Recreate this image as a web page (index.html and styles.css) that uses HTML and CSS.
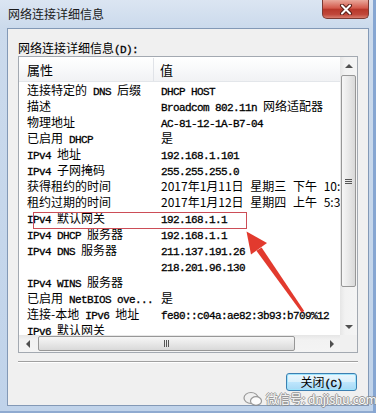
FILE: index.html
```html
<!DOCTYPE html>
<html lang="zh-CN">

<head>
  <meta charset="UTF-8">
  <title>网络连接详细信息</title>
  <link rel="stylesheet" href="styles.css">
</head>

<body>
  <div class="window">
    <!-- Title bar -->
    <div class="titlebar">
      <div class="title">网络连接详细信息</div>
      <div class="close">
        <svg width="14" height="11" viewBox="0 0 14 11">
          <path d="M3 1.5 L11 9.5 M11 1.5 L3 9.5" stroke="#5a1f18" stroke-width="4" stroke-linecap="round" />
          <path d="M3 1.5 L11 9.5 M11 1.5 L3 9.5" stroke="#fff" stroke-width="2" stroke-linecap="round" />
        </svg>
      </div>
    </div>

    <!-- Client area -->
    <div class="client">
      <div class="caption">网络连接详细信息<span class="m">(D):</span></div>

      <div class="listbox">
        <div class="main">
          <div class="head">
            <div class="k">属性</div>
            <div class="v">值</div>
          </div>
          <div class="row"><div class="k">连接特定的<span class="m"> DNS </span>后缀</div><div class="v"><span class="m">DHCP HOST</span></div></div>
          <div class="row"><div class="k">描述</div><div class="v"><span class="m">Broadcom 802.11n </span>网络适配器</div></div>
          <div class="row"><div class="k">物理地址</div><div class="v"><span class="m">AC-81-12-1A-B7-04</span></div></div>
          <div class="row"><div class="k">已启用<span class="m"> DHCP</span></div><div class="v">是</div></div>
          <div class="row"><div class="k"><span class="m">IPv4 </span>地址</div><div class="v"><span class="m">192.168.1.101</span></div></div>
          <div class="row"><div class="k"><span class="m">IPv4 </span>子网掩码</div><div class="v"><span class="m">255.255.255.0</span></div></div>
          <div class="row"><div class="k">获得租约的时间</div><div class="v date">2017年1月11日 星期三 下午 10:35:51</div></div>
          <div class="row"><div class="k">租约过期的时间</div><div class="v date">2017年1月12日 星期四 上午 5:34:51</div></div>
          <div class="row"><div class="k"><span class="m">IPv4 </span>默认网关</div><div class="v"><span class="m">192.168.1.1</span></div></div>
          <div class="row"><div class="k"><span class="m">IPv4 DHCP </span>服务器</div><div class="v"><span class="m">192.168.1.1</span></div></div>
          <div class="row"><div class="k"><span class="m">IPv4 DNS </span>服务器</div><div class="v"><span class="m">211.137.191.26</span></div></div>
          <div class="row"><div class="k"></div><div class="v"><span class="m">218.201.96.130</span></div></div>
          <div class="row"><div class="k"><span class="m">IPv4 WINS </span>服务器</div><div class="v"></div></div>
          <div class="row"><div class="k">已启用<span class="m"> NetBIOS ove...</span></div><div class="v">是</div></div>
          <div class="row"><div class="k">连接-本地<span class="m"> IPv6 </span>地址</div><div class="v"><span class="m">fe80::c04a:ae82:3b93:b709%12</span></div></div>
          <div class="row"><div class="k"><span class="m">IPv6 </span>默认网关</div><div class="v"></div></div>
        </div>

        <!-- Vertical scrollbar -->
        <div class="vscroll">
          <div class="arr up"></div>
          <div class="thumb vthumb"><span class="grip"></span></div>
          <div class="fill"></div>
          <div class="arr down"></div>
        </div>

        <!-- Horizontal scrollbar -->
        <div class="hscroll">
          <div class="arr left"></div>
          <div class="thumb hthumb"><span class="grip"></span></div>
          <div class="fill"></div>
          <div class="arr right"></div>
        </div>
        <div class="corner"></div>
      </div>

      <div class="sep"></div>

      <div class="actions">
        <button class="btn">关闭<span class="m">(C)</span></button>
      </div>
    </div>

    <!-- Annotation overlays -->
    <div class="highlight"></div>
    <svg class="arrow" width="376" height="413" viewBox="0 0 376 413">
      <polygon points="304.2,311 301.8,312.8 256.4,250.8 261.6,247.4" fill="#e23a2e" />
      <polygon points="246.5,231.5 267,243 251,254.5" fill="#e23a2e" />
    </svg>

    <div class="watermark">
      <svg width="20" height="16" viewBox="0 0 20 16">
        <ellipse cx="8" cy="7" rx="7" ry="5.5" fill="none" stroke="#8a8a8a" stroke-width="1.2" />
        <ellipse cx="13" cy="10" rx="5.5" ry="4.3" fill="#fff" stroke="#8a8a8a" stroke-width="1.2" />
      </svg>
      <span>微信号: dnjishu.com</span>
    </div>
  </div>
</body>

</html>
```

FILE: styles.css
```css
/* Global */
body {
  margin: 0;
  font-family: "Noto Sans CJK SC", sans-serif;
  font-size: 12px;
  color: #000;
}

/* latin runs, SimSun-like narrow mono */
.m {
  font-family: "Liberation Mono", monospace;
  font-size: 11px;
  letter-spacing: -0.6px;
  -webkit-text-stroke: 0.3px #000;
}

/* Window frame */
.window {
  position: relative;
  width: 376px;
  height: 413px;
  box-sizing: border-box;
  display: flex;
  flex-direction: column;
  padding: 0 7px 7px 7px;
  background: linear-gradient(#dbe5f2, #cbdaec 28px, #c0d3ea);
  box-shadow: inset -3px 0 0 #86a6d2, inset 0 -2px 0 #8faad0;
}

.titlebar {
  height: 28px;
  display: flex;
  justify-content: space-between;
  align-items: flex-start;
}

.title {
  padding: 6px 0 0 1px;
  line-height: 16px;
  color: #1a1a1a;
}

.close {
  width: 47px;
  height: 19px;
  box-sizing: border-box;
  display: flex;
  align-items: center;
  justify-content: center;
  border: 1px solid #7b3a33;
  border-top: none;
  border-radius: 0 0 5px 5px;
  background: linear-gradient(#e9a89b, #d3594b 45%, #b8382b 52%, #c0473a 80%, #d87d6e);
}

/* Client area */
.client {
  flex: 1;
  display: flex;
  flex-direction: column;
  padding: 10px 10px 0 10px;
  background-color: #f0f0f0;
  border: 1px solid #8399b6;
}

.caption {
  height: 17px;
  line-height: 17px;
}

/* List view */
.listbox {
  display: grid;
  grid-template-columns: 321px 17px;
  grid-template-rows: 278px 17px;
  background-color: #fff;
  border: 1px solid #a3a9b1;
}

.main {
  overflow: hidden;
}

.head {
  display: flex;
  height: 25px;
  box-sizing: border-box;
  padding-top: 1px;
  line-height: 23px;
  font-size: 13px;
  background: linear-gradient(#fff, #f8f9fa 50%, #f1f2f4);
  border-bottom: 1px solid #e3e6ea;
}

.head .k {
  border-right: 1px solid #e0e3e8;
}

.head .v {
  padding-left: 6px;
}

.row {
  display: flex;
  height: 16px;
  line-height: 16px;
}

.k {
  width: 135px;
  flex-shrink: 0;
  box-sizing: border-box;
  padding-left: 8px;
  white-space: nowrap;
  overflow: hidden;
}

.v {
  flex: 1;
  padding-left: 7px;
  white-space: nowrap;
  overflow: hidden;
}

.date {
  word-spacing: 4px;
}

/* Scrollbars */
.vscroll {
  display: flex;
  flex-direction: column;
  background: linear-gradient(to right, #e6e6e6, #f2f2f2 30%, #f4f4f4);
}

.hscroll {
  display: flex;
  background: linear-gradient(#e6e6e6, #f2f2f2 30%, #f4f4f4);
}

.corner {
  background-color: #f0f0f0;
}

.fill {
  flex: 1;
}

.arr {
  width: 17px;
  height: 17px;
  flex-shrink: 0;
  display: flex;
  align-items: center;
  justify-content: center;
}

.arr::before {
  content: "";
  width: 0;
  height: 0;
  border: 4px solid transparent;
}

.arr.up::before {
  border-top: none;
  border-bottom-color: #505050;
}

.arr.down::before {
  border-bottom: none;
  border-top-color: #505050;
}

.arr.left::before {
  border-left: none;
  border-right-color: #505050;
}

.arr.right::before {
  border-right: none;
  border-left-color: #505050;
}

.thumb {
  box-sizing: border-box;
  border: 1px solid #979797;
  border-radius: 2px;
  display: flex;
  align-items: center;
  justify-content: center;
}

.vthumb {
  height: 212px;
  margin: 1px 1px 0 1px;
  background: linear-gradient(to right, #f6f6f6, #e8e8e8 50%, #d9d9d9);
}

.hthumb {
  width: 257px;
  margin: 1px 0 1px 2px;
  background: linear-gradient(#f6f6f6, #e8e8e8 50%, #d9d9d9);
}

.vthumb .grip {
  width: 7px;
  height: 5px;
  background: repeating-linear-gradient(#555 0 1px, transparent 1px 2px);
}

.hthumb .grip {
  width: 5px;
  height: 7px;
  background: repeating-linear-gradient(to right, #555 0 1px, transparent 1px 2px);
}

/* Separator and button */
.sep {
  margin-top: 8px;
  border-top: 1px solid #a0a0a0;
  border-bottom: 1px solid #fff;
}

.actions {
  display: flex;
  justify-content: flex-end;
  margin-top: 10px;
  padding-right: 1px;
}

.btn {
  width: 71px;
  height: 18px;
  padding: 0;
  box-sizing: border-box;
  font-family: "Noto Sans CJK SC", sans-serif;
  font-size: 12px;
  line-height: 16px;
  color: #000;
  border: 1px solid #3c7fb1;
  border-radius: 3px;
  background: linear-gradient(#eaf6fd, #d9f0fc 50%, #bee6fd 50%, #a7d9f5);
  box-shadow: inset 0 0 0 1px #9fe4fc;
}

/* Overlays */
.highlight {
  position: absolute;
  left: 33px;
  top: 212px;
  width: 214px;
  height: 17px;
  box-sizing: border-box;
  border: 1px solid #cc4d57;
}

.arrow {
  position: absolute;
  left: 0;
  top: 0;
  pointer-events: none;
}

.watermark {
  position: absolute;
  left: 243px;
  top: 390px;
  display: flex;
  align-items: center;
  gap: 3px;
  font-size: 12px;
  white-space: nowrap;
  color: #fff;
  opacity: 0.85;
  text-shadow: 1px 0 0 #888, -1px 0 0 #888, 0 1px 0 #888, 0 -1px 0 #888;
}
```
